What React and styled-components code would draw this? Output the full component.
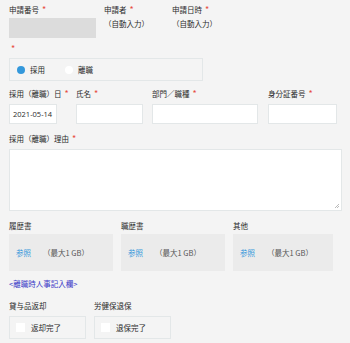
import React from "react";
import styled, { createGlobalStyle } from "styled-components";

const Global = createGlobalStyle`
  html, body { margin: 0; padding: 0; background: #f4f4f4; }
  body {
    font-family: "Noto Sans CJK JP", "Noto Sans", sans-serif;
    font-size: 7.5px;
    color: #2b2b2b;
  }
`;

const Form = styled.div`
  width: 350px;
  height: 343px;
  box-sizing: border-box;
  padding: 4px 9px 0;
  display: flex;
  flex-direction: column;
  overflow: hidden;
`;

const Row = styled.div`
  display: flex;
  gap: ${(p) => p.$gap ?? 8}px;
  margin-top: ${(p) => p.$mt ?? 0}px;
`;

const Field = styled.div`
  display: flex;
  flex-direction: column;
  width: ${(p) => (p.$w ? `${p.$w}px` : "auto")};
  flex: none;
`;

const Label = styled.div`
  height: 12px;
  line-height: 12px;
  white-space: nowrap;
  margin-bottom: ${(p) => p.$mb ?? 4}px;
`;

const Req = styled.span`
  color: #e74c3c;
  margin-left: ${(p) => p.$ml ?? 3}px;
  font-size: 9px;
`;

const GreyBox = styled.div`
  height: 20px;
  background: #dcdcdc;
`;

const AutoText = styled.div`
  line-height: 12px;
  padding-top: 2px;
`;

const OptionBox = styled.div`
  display: flex;
  align-items: center;
  height: 23px;
  width: 194px;
  box-sizing: border-box;
  border: 1px solid #e3e7e8;
  padding-left: 7px;
`;

const Radio = styled.span`
  width: 8px;
  height: 8px;
  border-radius: 50%;
  background: ${(p) => (p.$on ? "#3498db" : "#fff")};
  margin-right: 5px;
`;

const OptionText = styled.span`
  margin-right: 20px;
`;

const Input = styled.div`
  width: ${(p) => p.$w}px;
  height: 20px;
  box-sizing: border-box;
  background: #fff;
  border: 1px solid #e3e7e8;
  display: flex;
  align-items: center;
  padding-left: 3px;
  font-family: "Open Sans", "Noto Sans", sans-serif;
  font-size: 7.5px;
`;

const TextArea = styled.div`
  position: relative;
  height: 62px;
  box-sizing: border-box;
  background: #fff;
  border: 1px solid #e3e7e8;
  width: 333px;
`;

const Grip = styled.svg`
  position: absolute;
  right: 1px;
  bottom: 1px;
`;

const FileBox = styled.div`
  height: 37px;
  background: #ebebeb;
  display: flex;
  align-items: center;
  padding-left: 7px;
  box-sizing: border-box;
`;

const FileLink = styled.span`
  color: #3498db;
  margin-right: 12px;
`;

const FileNote = styled.span`
  color: #555;
`;

const SectionLink = styled.div`
  color: #3b3bc7;
  line-height: 12px;
  margin-top: 7px;
`;

const CheckBox = styled.div`
  display: flex;
  align-items: center;
  height: 23px;
  width: 77px;
  box-sizing: border-box;
  border: 1px solid #e3e7e8;
  padding-left: 6px;
`;

const Square = styled.span`
  width: 9px;
  height: 9px;
  background: #fff;
  margin-right: 6px;
`;

function FileField({ label, w }) {
  return (
    <Field $w={w}>
      <Label $mb={2}>{label}</Label>
      <FileBox>
        <FileLink>参照</FileLink>
        <FileNote>（最大1 GB）</FileNote>
      </FileBox>
    </Field>
  );
}

function CheckField({ label, text, w }) {
  return (
    <Field $w={w}>
      <Label>{label}</Label>
      <CheckBox>
        <Square />
        {text}
      </CheckBox>
    </Field>
  );
}

export default function App() {
  return (
    <>
      <Global />
      <Form>
        <Row>
          <Field $w={87}>
            <Label $mb={2}>
              申請番号<Req>*</Req>
            </Label>
            <GreyBox />
          </Field>
          <Field $w={60}>
            <Label $mb={0}>
              申請者<Req>*</Req>
            </Label>
            <AutoText>（自動入力）</AutoText>
          </Field>
          <Field $w={60}>
            <Label $mb={0}>
              申請日時<Req>*</Req>
            </Label>
            <AutoText>（自動入力）</AutoText>
          </Field>
        </Row>
        <Row $mt={5}>
          <Field>
            <Label $mb={3}>
              <Req $ml={2}>*</Req>
            </Label>
            <OptionBox>
              <Radio $on />
              <OptionText>採用</OptionText>
              <Radio />
              <OptionText>離職</OptionText>
            </OptionBox>
          </Field>
        </Row>
        <Row $mt={7} $gap={0}>
          <Field $w={67}>
            <Label>
              採用（離職）日<Req>*</Req>
            </Label>
            <Input $w={48}>2021-05-14</Input>
          </Field>
          <Field $w={76}>
            <Label>
              氏名<Req>*</Req>
            </Label>
            <Input $w={67} />
          </Field>
          <Field $w={116}>
            <Label>
              部門／職種<Req>*</Req>
            </Label>
            <Input $w={106} />
          </Field>
          <Field $w={70}>
            <Label>
              身分証番号<Req>*</Req>
            </Label>
            <Input $w={69} />
          </Field>
        </Row>
        <Row $mt={9}>
          <Field>
            <Label>
              採用（離職）理由<Req>*</Req>
            </Label>
            <TextArea>
              <Grip width="6" height="6" viewBox="0 0 6 6">
                <path d="M5 1 L1 5 M5 3 L3 5" stroke="#aaa" strokeWidth="0.8" />
              </Grip>
            </TextArea>
          </Field>
        </Row>
        <Row $mt={9}>
          <FileField label="履歴書" w={104} />
          <FileField label="職歴書" w={104} />
          <FileField label="其他" w={100} />
        </Row>
        <SectionLink>&lt;離職時人事記入欄&gt;</SectionLink>
        <Row $mt={10}>
          <CheckField label="貸与品返却" text="返却完了" w={77} />
          <CheckField label="労健保退保" text="退保完了" w={78} />
        </Row>
      </Form>
    </>
  );
}
